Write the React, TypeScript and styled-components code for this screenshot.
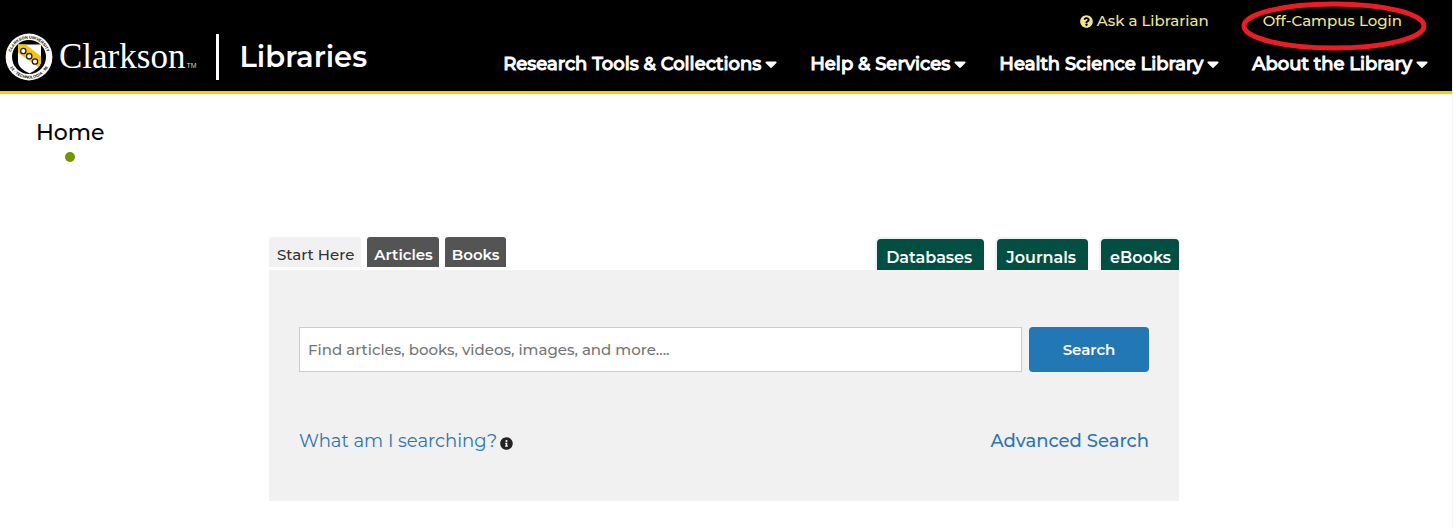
import React from "react";
import styled, { createGlobalStyle } from "styled-components";
import { FaCaretDown, FaInfoCircle, FaQuestionCircle } from "react-icons/fa";

const GlobalStyle = createGlobalStyle`
  * { box-sizing: border-box; }
  body {
    margin: 0;
    background: #fff;
    color: #000;
    font-family: Montserrat, Inter, "Open Sans", sans-serif;
    font-size: 15px;
    line-height: 20px;
  }
  a { text-decoration: none; color: inherit; }
  ul { margin: 0; padding: 0; list-style: none; }
`;

const Page = styled.div`
  border-right: 1px solid #f4f4f4;
  min-height: 100vh;
`;

const Header = styled.header`
  display: flex;
  justify-content: space-between;
  background: #000;
  border-bottom: 3px solid #ffcc00;
  padding: 0 24px 0 5px;
`;

const Brand = styled.div`
  display: flex;
  align-items: center;
  padding: 33px 0 10px;
`;

const LogoLink = styled.a`
  display: flex;
  align-items: center;
  color: #fff;
`;

const Wordmark = styled.span`
  margin-left: 6px;
  color: #fff;
  font-family: "Liberation Serif", serif;
  font-size: 35px;
  line-height: 46px;
`;

const Trademark = styled.small`
  align-self: flex-end;
  margin-left: 1px;
  color: #ccc;
  font-family: "Liberation Sans", sans-serif;
  font-size: 7px;
  line-height: 30px;
`;

const SiteName = styled.a`
  margin-left: 19px;
  border-left: 3px solid #fff;
  padding-left: 21px;
  color: #fff;
  font-size: 29px;
  font-weight: 600;
  line-height: 46px;
`;

const Menus = styled.div`
  display: flex;
  flex-direction: column;
  align-items: flex-end;
  gap: 23px;
  padding-top: 11px;
`;

const QuickLinks = styled.div`
  display: flex;
  gap: 54px;
  padding-right: 26px;
`;

const QuickLink = styled.a`
  position: relative;
  display: flex;
  align-items: center;
  gap: 4px;
  color: #f0e68c;
  font-size: 15px;
  font-weight: 500;

  > svg:first-child { width: 13px; height: 13px; }
`;

const Marker = styled.svg`
  position: absolute;
  top: -11px;
  left: -23px;
  width: 188px;
  height: 52px;
  pointer-events: none;
`;

const MainNav = styled.ul`
  display: flex;
  gap: 33px;
`;

const NavButton = styled.button`
  display: flex;
  align-items: center;
  gap: 4px;
  border: 0;
  padding: 0;
  background: none;
  color: #fff;
  font-family: inherit;
  font-size: 18px;
  font-weight: 500;
  line-height: 20px;
  white-space: nowrap;
  -webkit-text-stroke: 1px currentColor;
`;

const Caret = styled(FaCaretDown)`
  width: 12px;
  height: 20px;
`;

const Crumb = styled.nav`
  display: inline-flex;
  flex-direction: column;
  align-items: center;
  gap: 4px;
  padding: 24px 0 0 36px;
  font-size: 22px;
  font-weight: 500;
  line-height: 30px;
`;

const Dot = styled.span`
  width: 10px;
  height: 10px;
  border-radius: 50%;
  background: #739600;
`;

const Main = styled.main`
  max-width: 910px;
  margin: 75px auto 0;
  position: relative;
  right: 2px;
`;

const TabBar = styled.div`
  display: flex;
  justify-content: space-between;
  align-items: flex-start;
`;

const TabGroup = styled.div<{ $gap: number }>`
  display: flex;
  gap: ${(p) => p.$gap}px;
`;

const Tab = styled.button<{ $active?: boolean }>`
  border: 0;
  border-radius: 3px 3px 0 0;
  padding: ${(p) => (p.$active ? "8px 7px 2px 8px" : "8px 6px 2px 7px")};
  background: ${(p) => (p.$active ? "#f1f1f1" : "#545454")};
  color: ${(p) => (p.$active ? "#333" : "#fff")};
  font-family: inherit;
  font-size: 15px;
  font-weight: ${(p) => (p.$active ? 500 : 600)};
  line-height: 20px;
`;

const ShortcutTab = styled.a`
  border-radius: 4px 4px 0 0;
  box-shadow: -1px -1px 0 1px #f1f1f1;
  margin-top: 2px;
  padding: 9px 12px 2px 9px;
  background: #004f42;
  color: #fff;
  font-size: 16px;
  font-weight: 600;
  line-height: 20px;

  &:last-child { padding-right: 8px; }
`;

const Panel = styled.section`
  position: relative;
  background: #f1f1f1;
  padding: 57px 30px 50px;
`;

const SearchForm = styled.form`
  display: flex;
  gap: 7px;
`;

const SearchInput = styled.input`
  flex: 1;
  min-width: 0;
  height: 45px;
  border: 1px solid #ccc;
  border-radius: 0;
  padding: 0 8px;
  background: #fff;
  font-family: inherit;
  font-size: 15px;
  font-weight: 500;

  &::placeholder { color: #757575; }
`;

const SearchButton = styled.button`
  width: 120px;
  height: 45px;
  border: 0;
  border-radius: 4px;
  background: #2277b5;
  color: #fff;
  font-family: inherit;
  font-size: 15px;
  font-weight: 600;
`;

const PanelLinks = styled.div`
  display: flex;
  justify-content: space-between;
  margin-top: 59px;
  color: #2c76b5;
  font-size: 18px;
  font-weight: 500;
  line-height: 20px;
`;

const HelpLink = styled.a`
  display: flex;
  align-items: center;
  gap: 3px;
  font-weight: 400;

  svg { width: 13px; height: 13px; margin-top: 5px; color: #222; }
`;

function Seal() {
  return (
    <svg width="48" height="48" viewBox="0 0 48 48" aria-hidden="true">
      <defs>
        <path id="sealTop" d="M5.500 24A18.500 18.500 0 0 1 42.500 24" />
        <path id="sealBottom" d="M2.500 24A21.500 21.500 0 0 0 45.500 24" />
        <clipPath id="shield">
          <path d="M13 11.500h23v16.500c0 6-6 9.500-11.500 12.500-6-3-11.500-6.500-11.500-12.500z" />
        </clipPath>
      </defs>
      <circle cx="24" cy="24" r="23.4" fill="#fff" />
      <circle cx="24" cy="24" r="17" fill="#000" />
      <g clipPath="url(#shield)">
        <rect x="12" y="10" width="25" height="32" fill="#fff" />
        <path d="M12 10H19L36 23.500V36L12 19z" fill="#f8c40c" />
      </g>
      <g fill="#fff" stroke="#222" strokeWidth="1.3">
        <circle cx="18.300" cy="18" r="2.700" />
        <circle cx="24.200" cy="23.200" r="2.700" />
        <circle cx="30" cy="28.500" r="2.700" />
      </g>
      <g fill="#000" fontFamily="Liberation Sans, sans-serif" fontWeight="700" fontSize="4">
        <text>
          <textPath href="#sealTop" startOffset="50%" textAnchor="middle">CLARKSON UNIVERSITY</textPath>
        </text>
        <text>
          <textPath href="#sealBottom" startOffset="50%" textAnchor="middle">18 · TECHNOLOGIA · 96</textPath>
        </text>
      </g>
    </svg>
  );
}

const navItems = [
  "Research Tools & Collections",
  "Help & Services",
  "Health Science Library",
  "About the Library",
];
const searchTabs = ["Start Here", "Articles", "Books"];
const shortcuts = ["Databases", "Journals", "eBooks"];

export default function App() {
  return (
    <Page>
      <GlobalStyle />
      <Header>
        <Brand>
          <LogoLink href="#clarkson">
            <Seal />
            <Wordmark>Clarkson</Wordmark>
            <Trademark>TM</Trademark>
          </LogoLink>
          <SiteName href="#libraries">Libraries</SiteName>
        </Brand>
        <Menus>
          <QuickLinks>
            <QuickLink href="#ask">
              <FaQuestionCircle />
              Ask a Librarian
            </QuickLink>
            <QuickLink href="#login">
              <span>Off-Campus Login</span>
              <Marker viewBox="0 0 188 52" aria-hidden="true">
                <ellipse cx="94" cy="26" rx="90" ry="22" fill="none" stroke="#ed1c24" strokeWidth="5" />
              </Marker>
            </QuickLink>
          </QuickLinks>
          <nav aria-label="Main">
            <MainNav>
              {navItems.map((item) => (
                <li key={item}>
                  <NavButton type="button">
                    {item}
                    <Caret />
                  </NavButton>
                </li>
              ))}
            </MainNav>
          </nav>
        </Menus>
      </Header>
      <Crumb aria-label="Breadcrumb">
        <a href="#home">Home</a>
        <Dot />
      </Crumb>
      <Main>
        <TabBar>
          <TabGroup $gap={6}>
            {searchTabs.map((tab, i) => (
              <Tab key={tab} type="button" $active={i === 0}>
                {tab}
              </Tab>
            ))}
          </TabGroup>
          <TabGroup $gap={13}>
            {shortcuts.map((name) => (
              <ShortcutTab key={name} href={`#${name}`}>
                {name}
              </ShortcutTab>
            ))}
          </TabGroup>
        </TabBar>
        <Panel>
          <SearchForm onSubmit={(e) => e.preventDefault()}>
            <SearchInput
              type="text"
              aria-label="Search the library"
              placeholder="Find articles, books, videos, images, and more...."
            />
            <SearchButton type="submit">Search</SearchButton>
          </SearchForm>
          <PanelLinks>
            <HelpLink href="#about-search">
              What am I searching?
              <FaInfoCircle />
            </HelpLink>
            <a href="#advanced">Advanced Search</a>
          </PanelLinks>
        </Panel>
      </Main>
    </Page>
  );
}
